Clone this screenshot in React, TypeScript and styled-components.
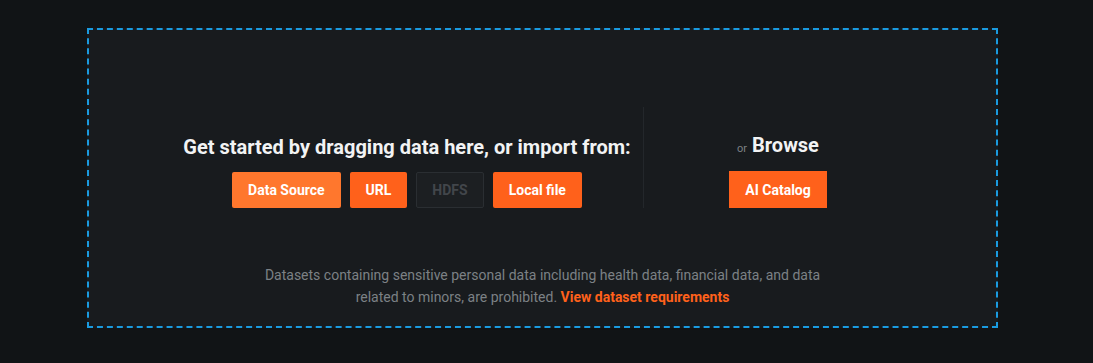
import styled, { createGlobalStyle } from 'styled-components'

const GlobalStyle = createGlobalStyle`
  html, body {
    margin: 0;
    background: #111416;
    font-family: Roboto, 'Liberation Sans', sans-serif;
  }
`

const Page = styled.div`
  padding: 28px 95px 0 87px;
`

const DropZone = styled.div`
  box-sizing: border-box;
  height: 300px;
  border: 2px dashed #1a9be0;
  background: #181b1e;
  padding: 77px 0 0;
  display: flex;
  flex-direction: column;
  align-items: center;
`

const ImportRow = styled.div`
  display: flex;
  align-items: flex-end;
  justify-content: center;
  padding-left: 11px;
`

const Column = styled.div<{ $width: number }>`
  width: ${(p) => p.$width}px;
  display: flex;
  flex-direction: column;
  align-items: center;
`

const Heading = styled.h2`
  margin: 0 0 13px;
  font-size: 20px;
  line-height: 24px;
  font-weight: 700;
  color: #f2f3f4;
  white-space: nowrap;
`

const Browse = styled.div`
  margin: 0 0 10px;
  font-size: 20px;
  line-height: 24px;
  font-weight: 700;
  color: #f2f3f4;

  small {
    font-size: 11px;
    font-weight: 400;
    color: #7c8185;
    margin-right: 5px;
  }
`

const Divider = styled.div`
  width: 1px;
  height: 101px;
  background: #23272b;
  margin-left: 13px;
`

const ButtonRow = styled.div`
  display: flex;
  gap: 9px;
`

const Button = styled.button<{ $variant?: 'hover' | 'disabled'; $tall?: boolean }>`
  height: ${(p) => (p.$tall ? 37 : 36)}px;
  padding: 0 15px;
  border-radius: ${(p) => (p.$tall ? 0 : 2)}px;
  border: 1px solid
    ${(p) => (p.$variant === 'disabled' ? '#2a2e32' : 'transparent')};
  background: ${(p) =>
    p.$variant === 'hover'
      ? '#ff772d'
      : p.$variant === 'disabled'
        ? '#1c1f22'
        : '#ff611b'};
  color: ${(p) => (p.$variant === 'disabled' ? '#42464b' : '#ffffff')};
  font-family: inherit;
  font-size: 14px;
  font-weight: 700;
  cursor: ${(p) => (p.$variant === 'disabled' ? 'default' : 'pointer')};
`

const Notice = styled.p`
  margin: 56px 0 0;
  width: 560px;
  text-align: center;
  font-size: 14px;
  line-height: 22px;
  color: #7c8185;

  a {
    color: #ff611b;
    font-weight: 700;
    text-decoration: none;
  }
`

const App = () => {
  return (
    <>
      <GlobalStyle />
      <Page>
        <DropZone>
          <ImportRow>
            <Column $width={446}>
              <Heading>Get started by dragging data here, or import from:</Heading>
              <ButtonRow>
                <Button $variant="hover">Data Source</Button>
                <Button>URL</Button>
                <Button $variant="disabled">HDFS</Button>
                <Button>Local file</Button>
              </ButtonRow>
            </Column>
            <Divider />
            <Column $width={268}>
              <Browse>
                <small>or</small>Browse
              </Browse>
              <Button $tall>AI Catalog</Button>
            </Column>
          </ImportRow>
          <Notice>
            Datasets containing sensitive personal data including health data,
            financial data, and data related to minors, are prohibited.{' '}
            <a href="#">View dataset requirements</a>
          </Notice>
        </DropZone>
      </Page>
    </>
  )
}

export default App
